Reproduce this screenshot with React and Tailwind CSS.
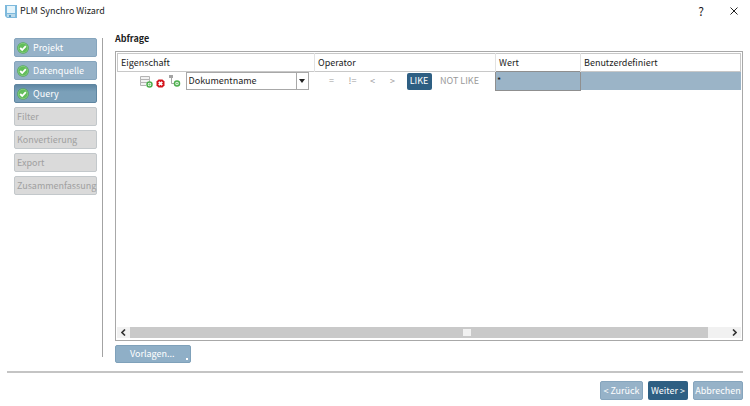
import { useState } from "react";
import clsx from "clsx";

const steps = [
  { label: "Projekt", state: "done" },
  { label: "Datenquelle", state: "done" },
  { label: "Query", state: "current" },
  { label: "Filter", state: "open" },
  { label: "Konvertierung", state: "open" },
  { label: "Export", state: "open" },
  { label: "Zusammenfassung", state: "open" },
];

const operators = [
  { label: "=", width: "w-[22px]" },
  { label: "!=", width: "w-[20px]" },
  { label: "<", width: "w-[20px]" },
  { label: ">", width: "w-[20px]" },
  { label: "LIKE", width: "w-[25px] mx-1" },
  { label: "NOT LIKE", width: "w-[48px]" },
];

function AppIcon() {
  return (
    <svg width="12" height="13" viewBox="0 0 12 13" aria-hidden="true">
      <path d="M0 0h12v13H2l-2-2z" fill="#7db9dc" />
      <path d="M2 1h8v7H2z" fill="#e4f4fb" />
      <path d="M2 9h8v3H2z" fill="#b9d9ea" />
      <path d="M4 10h2v2H4z" fill="#5c9cc4" />
    </svg>
  );
}

function DoneIcon() {
  return (
    <svg width="12" height="12" viewBox="0 0 12 12" className="shrink-0" aria-hidden="true">
      <circle cx="6" cy="6" r="5.8" fill="#3f9d48" />
      <circle cx="6" cy="6" r="4.9" fill="#62bd5a" stroke="#b5e3ae" strokeWidth="0.5" />
      <path d="M3.2 6l2 2 3.6-3.8" fill="none" stroke="#fff" strokeWidth="1.8" />
    </svg>
  );
}

function AddRowIcon() {
  return (
    <svg width="13" height="13" viewBox="0 0 13 13" aria-hidden="true">
      <path d="M0.5 1.5h9v3h-9zM0.5 4.5h9v3h-9zM6 10.5H0.5v-3H6" fill="#f2f2f2" stroke="#b4b4b4" />
      <circle cx="9.5" cy="9.5" r="2.5" fill="#fff" stroke="#4cae4c" strokeWidth="1.5" />
      <path d="M9.5 8.3v2.4M8.3 9.5h2.4" stroke="#6fc06f" strokeWidth="0.8" />
    </svg>
  );
}

function DeleteIcon() {
  return (
    <svg width="9" height="9" viewBox="0 0 9 9" aria-hidden="true">
      <path d="M2.5 0.5h4l2 2v4l-2 2h-4l-2-2v-4z" fill="#d3131b" />
      <path d="M2.8 2.8l3.4 3.4M6.2 2.8L2.8 6.2" stroke="#fff" strokeWidth="1.9" />
    </svg>
  );
}

function AddChildIcon() {
  return (
    <svg width="12" height="12" viewBox="0 0 12 12" aria-hidden="true">
      <path d="M0 0h4v3H0z" fill="#a3a3a3" />
      <path d="M2.5 3v5.5H5" fill="none" stroke="#a8a8a8" />
      <circle cx="8" cy="8.5" r="2.5" fill="#fff" stroke="#4cae4c" strokeWidth="1.5" />
      <path d="M8 7.3v2.4M6.8 8.5h2.4" stroke="#6fc06f" strokeWidth="0.8" />
    </svg>
  );
}

function Chevron({ left }) {
  return (
    <svg width="5" height="7" viewBox="0 0 5 7" aria-hidden="true">
      <path d={left ? "M4 0.5L1 3.5l3 3" : "M1 0.5l3 3-3 3"} fill="none" stroke="#333" strokeWidth="1.6" />
    </svg>
  );
}

function TitleBar() {
  return (
    <header className="flex h-[22px] items-center justify-between pr-3 pl-[5px]">
      <div className="flex items-center gap-[3px]">
        <AppIcon />
        <h1>PLM Synchro Wizard</h1>
      </div>
      <div className="flex items-center gap-[26px]">
        <button type="button" aria-label="Hilfe" className="text-[12px] leading-4">?</button>
        <button type="button" aria-label="Schließen">
          <svg width="8" height="8" viewBox="0 0 8 8" aria-hidden="true">
            <path d="M0.5 0.5l7 7M7.5 0.5l-7 7" stroke="#222" />
          </svg>
        </button>
      </div>
    </header>
  );
}

function Steps() {
  return (
    <nav className="flex w-[89px] shrink-0 flex-col gap-1 border-r border-[#a3a3a3] pr-[5px]">
      {steps.map(({ label, state }) => (
        <button
          key={label}
          type="button"
          disabled={state === "open"}
          aria-current={state === "current" ? "step" : undefined}
          className={clsx(
            "flex h-[19px] items-center gap-1 rounded-[2px] border px-[2px] whitespace-nowrap",
            state === "done" && "border-[#86a5bd] bg-[#96b2c8] text-white",
            state === "current" && "border-[#5f86a1] bg-linear-to-b from-[#5f87a3] to-[#7ba0b9] to-40% text-white",
            state === "open" && "border-[#c3c8cb] bg-[#dadada] text-[#a0a0a0]"
          )}
        >
          {state !== "open" && <DoneIcon />}
          {label}
        </button>
      ))}
    </nav>
  );
}

function QueryTable() {
  const [operator, setOperator] = useState("LIKE");

  return (
    <table className="w-full table-fixed border-collapse text-left">
      <thead>
        <tr className="h-[18px] border border-[#c8c8c8]">
          <th className="w-[197px] border-r border-[#e2e2e2] p-0 pl-[3px] font-normal">Eigenschaft</th>
          <th className="w-[181px] border-r border-[#e2e2e2] p-0 pl-[3px] font-normal">Operator</th>
          <th className="w-[85px] border-r border-[#e2e2e2] p-0 pl-[3px] font-normal">Wert</th>
          <th className="p-0 pl-[3px] font-normal">Benutzerdefiniert</th>
        </tr>
      </thead>
      <tbody>
        <tr className="h-[18px]">
          <td className="p-0">
            <div className="flex items-center pl-[22px]">
              <button type="button" aria-label="Zeile hinzufügen"><AddRowIcon /></button>
              <button type="button" aria-label="Zeile löschen" className="ml-[3px] pt-1"><DeleteIcon /></button>
              <button type="button" aria-label="Unterzeile hinzufügen" className="ml-1"><AddChildIcon /></button>
              <div className="relative ml-[5px] w-[123px]">
                <select
                  aria-label="Eigenschaft"
                  className="block h-[18px] w-full appearance-none border border-[#a8a8a8] bg-white pl-[2px] leading-4"
                >
                  <option>Dokumentname</option>
                </select>
                <span className="pointer-events-none absolute inset-y-px right-px flex w-[12px] items-center justify-center border-l border-[#a8a8a8]">
                  <svg width="6" height="4" viewBox="0 0 6 4" aria-hidden="true">
                    <path d="M0 0h6L3 4z" fill="#222" />
                  </svg>
                </span>
              </div>
            </div>
          </td>
          <td className="p-0">
            <div className="flex items-center pl-[6px]">
              {operators.map(({ label, width }) => (
                <button
                  key={label}
                  type="button"
                  aria-pressed={operator === label}
                  onClick={() => setOperator(label)}
                  className={clsx(
                    "h-[17px] rounded-[2px] text-center whitespace-nowrap",
                    width,
                    operator === label ? "bg-[#2e5f83] text-white" : "text-[#999999]"
                  )}
                >
                  {label}
                </button>
              ))}
            </div>
          </td>
          <td className="border border-[#8f8f8f] bg-[#9bb4c7] p-0">
            <input
              aria-label="Wert"
              defaultValue="*"
              className="block h-4 w-full bg-transparent pl-px outline-none"
            />
          </td>
          <td className="bg-[#9bb4c7] p-0" />
        </tr>
      </tbody>
    </table>
  );
}

function ScrollBar() {
  return (
    <div className="flex h-[11px] bg-[#f1f1f1]">
      <button type="button" aria-label="Nach links" className="flex w-[13px] items-center justify-center">
        <Chevron left />
      </button>
      <div className="flex flex-1 pr-5">
        <div className="flex flex-1 items-center justify-center bg-[#c9c9c9] pl-24">
          <span className="h-[7px] w-2 bg-[#f1f1f1]" />
        </div>
      </div>
      <button type="button" aria-label="Nach rechts" className="flex w-[13px] items-center justify-center">
        <Chevron />
      </button>
    </div>
  );
}

export default function App() {
  return (
    <div className="flex min-h-screen flex-col bg-white font-['Noto_Sans_CJK_SC','Noto_Sans',sans-serif] text-[9px] leading-[14px] text-[#1c1c1c]">
      <TitleBar />
      <div className="flex flex-1 gap-3 pt-[10px] pr-[7px] pb-2 pl-[14px]">
        <div className="flex pt-[6px] pb-[6px]">
          <Steps />
        </div>
        <main className="flex min-w-0 flex-1 flex-col">
          <h2 className="mb-[5px] font-bold">Abfrage</h2>
          <section className="flex flex-1 flex-col justify-between border border-[#a8a8a8] px-px pt-px pb-[2px]">
            <QueryTable />
            <ScrollBar />
          </section>
          <button
            type="button"
            className="mt-1 flex h-[18px] w-[76px] items-end justify-between rounded-[2px] border border-[#7fa1ba] bg-[#8fafc7] pr-[2px] pb-px pl-[14px] text-white"
          >
            Vorlagen...
            <span className="mb-px size-[2px] bg-white" />
          </button>
        </main>
      </div>
      <footer className="mx-[7px] flex justify-end gap-[5px] border-t-2 border-[#c4c4c4] pt-2 pb-[6px]">
        <button type="button" className="h-[19px] w-[43px] rounded-[2px] border border-[#86a5bd] bg-[#96b2c8] whitespace-nowrap text-white">
          &lt; Zurück
        </button>
        <button type="button" className="h-[19px] w-[40px] rounded-[2px] bg-[#2e5f83] whitespace-nowrap text-white">
          Weiter &gt;
        </button>
        <button type="button" className="h-[19px] w-[50px] rounded-[2px] border border-[#86a5bd] bg-[#96b2c8] whitespace-nowrap text-white">
          Abbrechen
        </button>
      </footer>
    </div>
  );
}
